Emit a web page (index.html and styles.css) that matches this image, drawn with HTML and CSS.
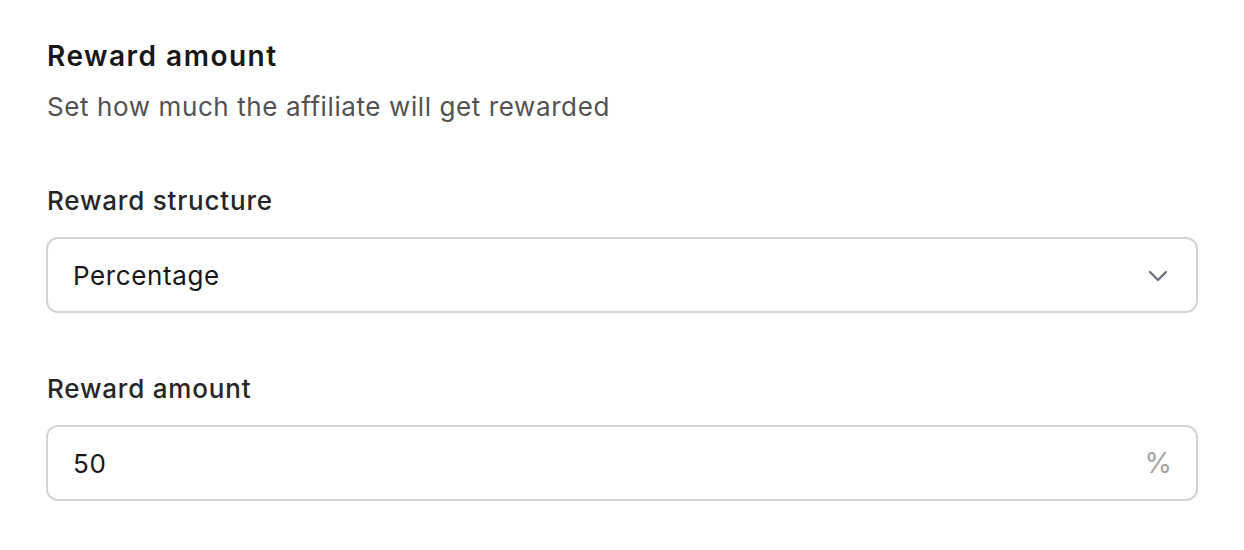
FILE: index.html
```html
<!DOCTYPE html>
<html>
<head>
<meta charset="utf-8">
<link rel="stylesheet" href="styles.css">
</head>
<body>
<div class="panel">
  <div class="header">
    <h2 class="title">Reward amount</h2>
    <p class="subtitle">Set how much the affiliate will get rewarded</p>
  </div>
  <div class="field">
    <label class="label">Reward structure</label>
    <div class="control">
      <span class="value">Percentage</span>
      <svg class="chevron" width="20" height="12" viewBox="0 0 20 12" fill="none"><path d="M2 2l8 8 8-8" stroke="#6b7280" stroke-width="2.4" stroke-linecap="round" stroke-linejoin="round"/></svg>
    </div>
  </div>
  <div class="field">
    <label class="label">Reward amount</label>
    <div class="control">
      <span class="value">50</span>
      <span class="suffix">%</span>
    </div>
  </div>
</div>
</body>
</html>
```
FILE: styles.css
```css
* { box-sizing: border-box; }
body {
  margin: 0;
  background: #ffffff;
  font-family: Inter, "Noto Sans", sans-serif;
  color: #171717;
}
.panel {
  padding: 38px 46px 0 46px;
  display: flex;
  flex-direction: column;
}
.header {
  display: flex;
  flex-direction: column;
  gap: 15px;
  padding-left: 1px;
  margin-bottom: 58px;
}
.title {
  margin: 0;
  font-size: 28px;
  line-height: 36px;
  font-weight: 600;
  letter-spacing: 1.5px;
  color: #171717;
}
.subtitle {
  margin: 0;
  font-size: 26px;
  line-height: 36px;
  font-weight: 400;
  letter-spacing: 0.6px;
  color: #525252;
}
.field {
  display: flex;
  flex-direction: column;
  gap: 18px;
  margin-bottom: 58px;
}
.label {
  padding-left: 1px;
  font-size: 26px;
  line-height: 36px;
  font-weight: 500;
  letter-spacing: 0.8px;
  color: #262626;
}
.control {
  height: 76px;
  border: 2px solid #d4d4d4;
  border-radius: 12px;
  display: flex;
  align-items: center;
  justify-content: space-between;
  padding: 0 28px 0 25px;
}
.value {
  font-size: 26px;
  letter-spacing: 0.6px;
  color: #171717;
}
.chevron { display: block; margin-top: 2px; }
.suffix {
  font-size: 28px;
  color: #a3a3a3;
  margin-right: -4px;
}
```
